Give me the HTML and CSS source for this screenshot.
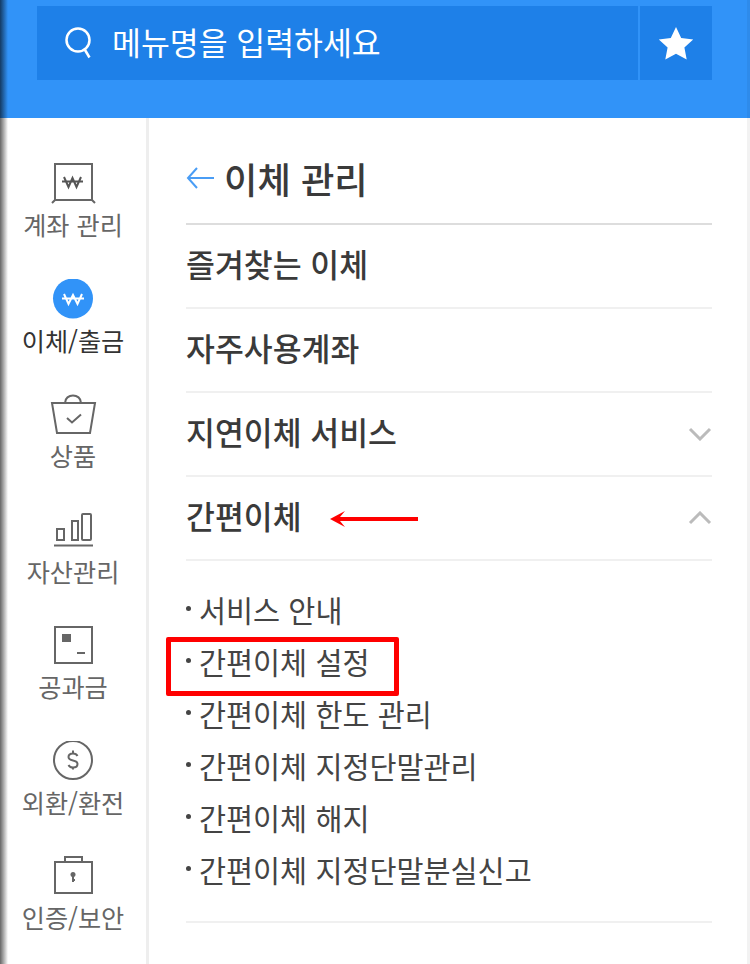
FILE: index.html
```html
<!DOCTYPE html>
<html lang="ko">
  <head>
    <meta charset="UTF-8" />
    <title>이체 관리</title>
    <meta name="viewport" content="width=device-width, initial-scale=1.0" />
    <link rel="stylesheet" href="styles.css">
  </head>
  <body>
    <div class="page">
      <header class="top">
        <div class="search">
          <svg class="search-icon" width="30" height="34" viewBox="0 0 30 34">
            <circle cx="14" cy="14" r="11.5" />
            <path d="M21 24l4.500 7.500" />
          </svg>
          <span class="search-text">메뉴명을 입력하세요</span>
        </div>
        <div class="fav">
          <svg width="36" height="34" viewBox="0 0 36 34">
            <path d="M18 1l5.200 11 12 1.400-8.800 8.200 2.300 11.900L18 27.700 7.300 33.500l2.300-11.900L.8 13.400l12-1.400z" />
          </svg>
        </div>
      </header>

      <div class="main">
        <nav class="side">
          <a class="side-item">
            <svg class="side-icon" width="48" height="44" viewBox="0 0 48 44">
              <path d="M6 37V1h37v36zM6 37l-3 3M43 37l3 3" />
              <path class="won" d="M15 14l4.500 10 4-9 4 9L32 14M13 18.500h21" />
            </svg>
            <span>계좌 관리</span>
          </a>
          <a class="side-item active">
            <svg class="side-icon" width="48" height="44" viewBox="0 0 48 44">
              <circle class="dot" cx="24" cy="19.500" r="20" />
              <path class="won-white" d="M15 15l4.500 10 4.500-9 4.500 9L33 15M13 19.500h22" />
            </svg>
            <span>이체/출금</span>
          </a>
          <a class="side-item">
            <svg class="side-icon" width="48" height="44" viewBox="0 0 48 44">
              <path d="M3 9h43l-5 30H8zM16 9c0-10 16-10 16 0" />
              <path d="M18 24l5 4.500 9-8" />
            </svg>
            <span>상품</span>
          </a>
          <a class="side-item">
            <svg class="side-icon" width="48" height="44" viewBox="0 0 48 44">
              <path d="M8 19h7v11H8zM23 11h6v19h-6zM34 4h7c.5 0 1 .5 1 1v24c0 .5-.5 1-1 1h-7c-.5 0-1-.5-1-1V5c0-.5.500-1 1-1zM5 35.500h39" />
            </svg>
            <span>자산관리</span>
          </a>
          <a class="side-item">
            <svg class="side-icon" width="48" height="44" viewBox="0 0 48 44">
              <path d="M6 2h37v36H6zM28 28h8" />
              <rect class="fill" x="13" y="9" width="9" height="8" />
            </svg>
            <span>공과금</span>
          </a>
          <a class="side-item">
            <svg class="side-icon" width="48" height="44" viewBox="0 0 48 44">
              <circle cx="24" cy="19" r="19" />
              <path d="M28.500 15c-.7-1.500-2.300-2.500-4.500-2.500-2.700 0-4.500 1.500-4.500 3.500s1.800 3 4.500 3.500 4.500 1.500 4.500 3.500-1.800 3.500-4.500 3.500c-2.200 0-3.800-1-4.500-2.500M24 9.500v3M24 25.500v3" />
            </svg>
            <span>외환/환전</span>
          </a>
          <a class="side-item">
            <svg class="side-icon" width="48" height="44" viewBox="0 0 48 44">
              <path d="M6 6h37v31H6zM16 6V1h17v5" />
              <circle class="fill" cx="24" cy="18.500" r="2.500" />
              <path d="M24 19v7M24 24h2" />
            </svg>
            <span>인증/보안</span>
          </a>
        </nav>

        <section class="content">
          <div class="title-row">
            <svg class="back" width="30" height="24" viewBox="0 0 30 24">
              <path d="M28 12H2M11 2L2 12l9 10" />
            </svg>
            <h1>이체 관리</h1>
          </div>

          <div class="row"><span>즐겨찾는 이체</span></div>
          <div class="row"><span>자주사용계좌</span></div>
          <div class="row">
            <span>지연이체 서비스</span>
            <svg class="chev" width="24" height="14" viewBox="0 0 24 14"><path d="M2 2l10 10L22 2" /></svg>
          </div>
          <div class="row">
            <span>간편이체</span>
            <svg class="chev" width="24" height="14" viewBox="0 0 24 14"><path d="M2 12L12 2l10 10" /></svg>
          </div>

          <ul class="sub">
            <li>서비스 안내</li>
            <li>간편이체 설정</li>
            <li>간편이체 한도 관리</li>
            <li>간편이체 지정단말관리</li>
            <li>간편이체 해지</li>
            <li>간편이체 지정단말분실신고</li>
          </ul>
        </section>
      </div>

      <!-- annotations drawn on top of the screen -->
      <svg class="mark-arrow" width="90" height="18" viewBox="0 0 90 18">
        <path d="M1 9L16 1l-5 6h78v4H11l5 6z" />
      </svg>
      <div class="mark-box"></div>

      <div class="edge-left"></div>
      <div class="edge-right"></div>
    </div>
  </body>
</html>
```

FILE: styles.css
```css
* {
  box-sizing: border-box;
}

body {
  margin: 0;
  font-family: "Noto Sans CJK KR", "Noto Sans", sans-serif;
  background: #fff;
  color: #333;
}

.page {
  position: relative;
  width: 750px;
  height: 964px;
  overflow: hidden;
}

/* top search bar */
.top {
  display: flex;
  gap: 2px;
  height: 118px;
  padding: 6px 38px 38px 37px;
  background: #3193f8;
}

.search {
  flex: 1;
  display: flex;
  align-items: center;
  padding-left: 27px;
  background: #1e80e8;
}

.search-icon {
  fill: none;
  stroke: #fff;
  stroke-width: 2.500;
}

.search-text {
  margin: 0 0 3px 18px;
  font-size: 31.400px;
  line-height: 1;
  color: #fff;
}

.fav {
  width: 72px;
  display: flex;
  align-items: center;
  justify-content: center;
  background: #1e80e8;
}

.fav svg {
  fill: #fff;
}

/* left menu */
.main {
  display: flex;
  height: 846px;
}

.side {
  width: 149px;
  padding-top: 45px;
  border-right: 3px solid #eee;
}

.side-item {
  height: 115.500px;
  display: flex;
  flex-direction: column;
  align-items: center;
  font-size: 25.200px;
  line-height: 30px;
  color: #666;
}

.side-item span {
  margin-top: 2px;
  white-space: nowrap;
}

.side-item.active {
  color: #333;
}

.side-icon {
  display: block;
  flex-shrink: 0;
  fill: none;
  stroke: #666;
  stroke-width: 2;
}

.side-icon .won {
  stroke-width: 2;
  stroke: #555;
}

.side-icon .dot {
  fill: #3193f8;
  stroke: none;
}

.side-icon .won-white {
  stroke: #fff;
  stroke-width: 2;
}

.side-icon .fill {
  fill: #666;
  stroke: none;
}

/* right content */
.content {
  width: 563px;
  padding-left: 37px;
}

.title-row {
  display: flex;
  align-items: center;
  height: 107px;
  padding-top: 15px;
  border-bottom: 2px solid #ddd;
}

.back {
  fill: none;
  stroke: #4a9df5;
  stroke-width: 2;
  margin-right: 8px;
}

h1 {
  margin: 0;
  font-size: 36.300px;
  font-weight: 500;
  line-height: 1;
  color: #3a3a3a;
}

.row {
  display: flex;
  align-items: center;
  justify-content: space-between;
  height: 84px;
  border-bottom: 2px solid #f0f0f0;
  font-size: 31.400px;
  font-weight: 500;
  color: #3a3a3a;
}

.row span {
  margin-bottom: 5px;
}

.chev {
  fill: none;
  stroke: #bbb;
  stroke-width: 3;
}

.sub {
  list-style: none;
  margin: 0;
  padding: 24px 0;
  border-bottom: 2px solid #f0f0f0;
}

.sub li {
  position: relative;
  height: 52px;
  padding-left: 13px;
  font-size: 29.400px;
  line-height: 48px;
  color: #444;
}

.sub li::before {
  content: "";
  position: absolute;
  left: 0;
  top: 21px;
  width: 5px;
  height: 5px;
  border-radius: 50%;
  background: #444;
}

/* red annotations */
.mark-arrow {
  position: absolute;
  left: 329px;
  top: 510px;
  fill: #f00;
}

.mark-box {
  position: absolute;
  left: 166px;
  top: 637px;
  width: 233px;
  height: 59px;
  border: 5px solid #f00;
  border-radius: 2px;
}

/* edges of the phone screen */
.edge-left {
  position: absolute;
  left: 0;
  top: 0;
  width: 8px;
  height: 100%;
  background: linear-gradient(to right, rgba(0, 0, 0, 0.6), rgba(0, 0, 0, 0));
}

.edge-right {
  position: absolute;
  right: 0;
  top: 0;
  width: 3px;
  height: 100%;
  background: rgba(0, 0, 0, 0.05);
}
```
